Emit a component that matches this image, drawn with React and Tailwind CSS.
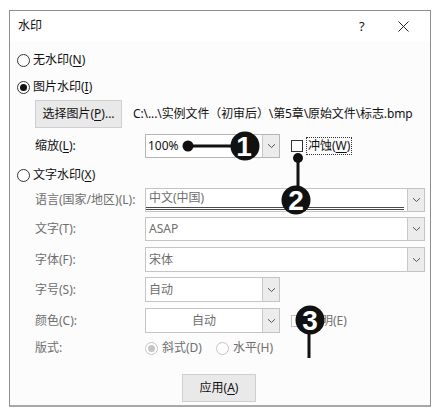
import React from "react";

const Chevron = ({ color = "#555" }) => (
  <svg width="9" height="6" viewBox="0 0 9 6">
    <path d="M1 1.2 L4.5 4.5 L8 1.2" fill="none" stroke={color} strokeWidth="1" />
  </svg>
);

const Radio = ({ checked, disabled }) => (
  <div
    className={`w-[13px] h-[13px] rounded-full border flex items-center justify-center shrink-0 bg-white ${
      disabled ? "border-[#c4c4c4]" : "border-[#333]"
    }`}
  >
    {checked && (
      <div className={`w-[7px] h-[7px] rounded-full ${disabled ? "bg-[#c4c4c4]" : "bg-[#111]"}`} />
    )}
  </div>
);

const U = ({ children }) => <span className="underline underline-offset-2">{children}</span>;

const DropBtn = () => (
  <div className="w-[17px] h-full bg-[#ececec] border-l border-[#c8c8c8] flex items-center justify-center shrink-0">
    <Chevron />
  </div>
);

export default function App() {
  return (
    <div
      className="w-[441px] h-[417px] bg-white relative overflow-hidden pt-[10px] pl-[9px] text-[12px] leading-none"
      style={{ fontFamily: '"Noto Sans", "Noto Sans CJK SC", sans-serif' }}
    >
      <div className="w-[422px] h-[397px] border border-[#8e8e8e] border-b-2 border-b-[#a8a8a8] bg-[#fcfcfc] flex flex-col">
        {/* title bar */}
        <div className="h-[30px] bg-white flex items-center pl-[8px] text-[#111] relative shrink-0">
          <span>水印</span>
          <span className="absolute left-[349px] top-[9px] text-[13px]">?</span>
          <svg className="absolute left-[388px] top-[10px]" width="11" height="11" viewBox="0 0 11 11">
            <path d="M0.5 0.5 L10.5 10.5 M10.5 0.5 L0.5 10.5" stroke="#222" strokeWidth="1" />
          </svg>
        </div>

        <div className="flex flex-col pl-[7px] text-[#111]">
          {/* 无水印 */}
          <div className="h-[20px] mt-[9px] flex items-center gap-[3px]">
            <Radio />
            <span>无水印(<U>N</U>)</span>
          </div>
          {/* 图片水印 */}
          <div className="h-[20px] mt-[7px] flex items-center gap-[3px]">
            <Radio checked />
            <span>图片水印(<U>I</U>)</span>
          </div>
          {/* 选择图片 */}
          <div className="h-[28px] mt-[3px] flex items-center pl-[18px]">
            <div className="w-[87px] h-[28px] bg-[#e9e9e9] border border-[#cfcfcf] flex items-center justify-center">
              选择图片(<U>P</U>)...
            </div>
            <span className="ml-[11px] whitespace-nowrap tracking-[-0.1px]">
              C:\...\实例文件（初审后）\第5章\原始文件\标志.bmp
            </span>
          </div>
          {/* 缩放 */}
          <div className="h-[24px] mt-[6px] flex items-center pl-[18px]">
            <span className="w-[110px]">缩放(<U>L</U>):</span>
            <div className="w-[135px] h-[24px] border border-[#b5b5b5] bg-white flex items-center">
              <span className="flex-1 pl-[2px]">100%</span>
              <DropBtn />
            </div>
            <div className="ml-[11px] w-[12px] h-[12px] border border-[#333] bg-white shrink-0" />
            <span className="ml-[3px] px-[1px] py-[2px] border border-dotted border-[#333]">
              冲蚀(<U>W</U>)
            </span>
          </div>
          {/* 文字水印 */}
          <div className="h-[20px] mt-[7px] flex items-center gap-[3px]">
            <Radio />
            <span>文字水印(<U>X</U>)</span>
          </div>

          <div className="text-[#6e6e6e] flex flex-col">
            {/* 语言 */}
            <div className="h-[24px] mt-[3px] flex items-center pl-[18px]">
              <span className="w-[110px]">语言(国家/地区)(L):</span>
              <div className="w-[280px] h-[24px] border border-[#c4c4c4] bg-white flex items-stretch">
                <div className="flex-1 flex items-center pl-[3px] mr-[3px] mb-[1px] border-b-[3px] border-double border-[#4a4a4a]">
                  中文(中国)
                </div>
                <DropBtn />
              </div>
            </div>
            {/* 文字 */}
            <div className="h-[24px] mt-[5px] flex items-center pl-[18px]">
              <span className="w-[110px]">文字(T):</span>
              <div className="w-[280px] h-[24px] border border-[#c4c4c4] bg-white flex items-center">
                <span className="flex-1 pl-[3px]">ASAP</span>
                <DropBtn />
              </div>
            </div>
            {/* 字体 */}
            <div className="h-[25px] mt-[6px] flex items-center pl-[18px]">
              <span className="w-[110px]">字体(F):</span>
              <div className="w-[280px] h-[25px] border border-[#c4c4c4] bg-white flex items-center">
                <span className="flex-1 pl-[3px]">宋体</span>
                <DropBtn />
              </div>
            </div>
            {/* 字号 */}
            <div className="h-[25px] mt-[5px] flex items-center pl-[18px]">
              <span className="w-[110px]">字号(S):</span>
              <div className="w-[135px] h-[25px] border border-[#c4c4c4] bg-white flex items-center">
                <span className="flex-1 pl-[3px]">自动</span>
                <DropBtn />
              </div>
            </div>
            {/* 颜色 */}
            <div className="h-[25px] mt-[6px] flex items-center pl-[18px]">
              <span className="w-[110px]">颜色(C):</span>
              <div className="w-[135px] h-[25px] border border-[#c4c4c4] bg-white flex items-center">
                <span className="flex-1 text-center">自动</span>
                <DropBtn />
              </div>
              <div className="ml-[11px] w-[12px] h-[12px] border border-[#c4c4c4] bg-white shrink-0" />
              <span className="ml-[6px]">透明(E)</span>
            </div>
            {/* 版式 */}
            <div className="h-[20px] mt-[5px] flex items-center pl-[18px]">
              <span className="w-[110px]">版式:</span>
              <Radio checked disabled />
              <span className="ml-[4px]">斜式(D)</span>
              <div className="ml-[14px]">
                <Radio disabled />
              </div>
              <span className="ml-[4px]">水平(H)</span>
            </div>
          </div>

          {/* 应用 */}
          <div className="mt-[16px] pl-[165px]">
            <div className="w-[74px] h-[28px] bg-[#e9e9e9] border border-[#cfcfcf] flex items-center justify-center text-[#111]">
              应用(<U>A</U>)
            </div>
          </div>
        </div>
      </div>

      {/* callouts overlay */}
      <svg className="absolute left-0 top-0 pointer-events-none" width="441" height="417" viewBox="0 0 441 417">
        <g fill="#111" stroke="#111">
          <circle cx="188" cy="146" r="5.5" stroke="none" />
          <line x1="188" y1="146" x2="234" y2="146" strokeWidth="3" />
          <circle cx="245" cy="146" r="14.5" stroke="none" />

          <circle cx="298" cy="158" r="5" stroke="none" />
          <line x1="298" y1="158" x2="298" y2="190" strokeWidth="3" />
          <circle cx="296" cy="200" r="14.5" stroke="none" />

          <circle cx="310" cy="320" r="14.5" stroke="none" />
          <line x1="309" y1="330" x2="309" y2="358" strokeWidth="3" />
        </g>
        <g
          fill="#fff"
          fontFamily='"Liberation Sans", Arial, sans-serif'
          fontWeight="bold"
          fontSize="28"
          textAnchor="middle"
        >
          <text x="244" y="156">1</text>
          <text x="296" y="210">2</text>
          <text x="310" y="330">3</text>
        </g>
      </svg>
    </div>
  );
}
